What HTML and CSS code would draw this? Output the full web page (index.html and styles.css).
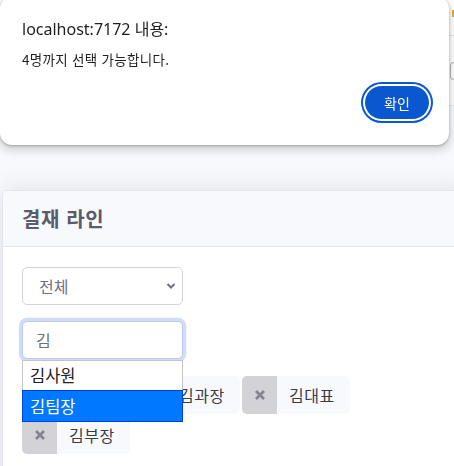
FILE: index.html
```html
<!DOCTYPE html>
<html lang="ko">
<head>
<meta charset="utf-8">
<title>결재 라인</title>
<link rel="stylesheet" href="styles.css">
</head>
<body>
<div class="page-top">
  <div class="page-bar"><span class="bar-mark"></span></div>
  <div class="page-panel"><span class="panel-mark"></span></div>
</div>

<div class="card">
  <div class="card-header"><h6 class="card-title">결재 라인</h6></div>
  <div class="card-body">
    <div class="select-wrap">
      <select class="form-select">
        <option>전체</option>
      </select>
      <svg class="chev" width="10" height="8" viewBox="0 0 10 8"><path d="M1.5 2 L5 5.5 L8.5 2" fill="none" stroke="#6e707e" stroke-width="2"/></svg>
    </div>
    <div class="search-wrap">
      <input class="form-input" type="text" value="김">
      <ul class="suggest">
        <li class="suggest-item">김사원</li>
        <li class="suggest-item active">김팀장</li>
      </ul>
    </div>
    <div class="tags">
      <span class="tag"><span class="tag-x"><svg width="12" height="12" viewBox="0 0 12 12"><path d="M2 2 L10 10 M10 2 L2 10" stroke="#84858f" stroke-width="2.8"/></svg></span><span class="tag-label">김대리</span></span>
      <span class="tag"><span class="tag-x"><svg width="12" height="12" viewBox="0 0 12 12"><path d="M2 2 L10 10 M10 2 L2 10" stroke="#84858f" stroke-width="2.8"/></svg></span><span class="tag-label">김과장</span></span>
      <span class="tag"><span class="tag-x"><svg width="12" height="12" viewBox="0 0 12 12"><path d="M2 2 L10 10 M10 2 L2 10" stroke="#84858f" stroke-width="2.8"/></svg></span><span class="tag-label">김대표</span></span>
      <span class="tag"><span class="tag-x"><svg width="12" height="12" viewBox="0 0 12 12"><path d="M2 2 L10 10 M10 2 L2 10" stroke="#84858f" stroke-width="2.8"/></svg></span><span class="tag-label">김부장</span></span>
    </div>
  </div>
</div>

<div class="dialog" role="alertdialog">
  <div class="dialog-title">localhost:7172 내용:</div>
  <div class="dialog-msg">4명까지 선택 가능합니다.</div>
  <div class="dialog-actions"><button class="dialog-btn">확인</button></div>
</div>
</body>
</html>
```

FILE: styles.css
```css
html, body {
  margin: 0;
  padding: 0;
}
body {
  width: 454px;
  height: 466px;
  overflow: hidden;
  background: #f8f9fc;
  font-family: "Noto Sans CJK KR", "Noto Sans", sans-serif;
  color: #3a3b45;
}

.page-top {
  background: #fff;
  height: 105px;
  border-bottom: 1px solid #eceef4;
}
.page-bar {
  height: 35px;
  border-bottom: 1px solid #e3e6f0;
  display: flex;
  justify-content: flex-end;
  align-items: flex-start;
}
.bar-mark {
  width: 2px;
  height: 7px;
  margin-top: 10px;
  background: #f0a43a;
}
.page-panel {
  display: flex;
  justify-content: flex-end;
}
.panel-mark {
  width: 3px;
  height: 16px;
  margin-top: 26px;
  border: 1px solid #b8b8bc;
  border-right: none;
  border-radius: 4px 0 0 4px;
}

.card {
  margin: 84px 0 0 2px;
  width: 470px;
  height: 300px;
  background: #fff;
  border: 1px solid #e3e6f0;
  border-radius: 5px;
  box-shadow: 0 0.15rem 1.75rem 0 rgba(58, 59, 69, 0.15);
}
.card-header {
  background: #f8f9fc;
  border-bottom: 1px solid #e3e6f0;
  height: 55px;
  display: flex;
  align-items: center;
  padding: 0 19px;
  border-radius: 5px 5px 0 0;
}
.card-title {
  margin: 0;
  font-size: 20px;
  font-weight: 700;
  color: #5a5c69;
  letter-spacing: 0.6px;
}
.card-body {
  padding: 20px 19px 0;
}

.select-wrap {
  position: relative;
  width: 161px;
}
.form-select {
  display: block;
  width: 161px;
  height: 38px;
  appearance: none;
  -webkit-appearance: none;
  background: #fff;
  border: 1px solid #d1d3e2;
  border-radius: 5px;
  padding: 0 12px 0 16px;
  font-family: inherit;
  font-size: 16px;
  color: #6e707e;
}
.chev {
  position: absolute;
  right: 7px;
  top: 15px;
}

.search-wrap {
  position: relative;
  width: 161px;
  margin-top: 16px;
}
.form-input {
  display: block;
  box-sizing: border-box;
  width: 161px;
  height: 38px;
  border: 1px solid #bac8f3;
  border-radius: 5px;
  padding: 0 13px;
  font-family: inherit;
  font-size: 16px;
  color: #6e707e;
  outline: none;
  box-shadow: 0 0 0 0.2rem rgba(78, 115, 223, 0.25);
}
.suggest {
  position: absolute;
  left: 0;
  top: 39px;
  width: 161px;
  margin: 0;
  padding: 0;
  list-style: none;
  background: #fff;
  z-index: 2;
}
.suggest-item {
  box-sizing: border-box;
  height: 30px;
  line-height: 28px;
  padding: 0 7px;
  font-size: 16.5px;
  color: #222;
  border: 1px solid #c4c4c4;
  border-bottom: none;
}
.suggest-item.active {
  height: 32px;
  line-height: 30px;
  background: #0078ff;
  color: #fff;
  border: 1px solid #0040e8;
}

.tags {
  margin-top: 17px;
  width: 340px;
  display: flex;
  flex-wrap: wrap;
  gap: 2px 2px;
}
.tag {
  display: inline-flex;
  width: 108px;
  height: 38px;
  border-radius: 5px;
  overflow: hidden;
  background: #f8f9fc;
}
.tag-x {
  width: 35px;
  flex: none;
  background: #d3d3d7;
  display: flex;
  align-items: center;
  justify-content: center;
}
.tag-label {
  display: flex;
  align-items: center;
  padding: 0 0 0 12px;
  font-size: 16px;
  letter-spacing: 0.5px;
  color: #3a3b45;
}

.dialog {
  position: fixed;
  left: 0;
  top: -3px;
  width: 449px;
  height: 148px;
  box-sizing: border-box;
  background: #fff;
  border-radius: 12px;
  box-shadow: 0 1px 3px rgba(0, 0, 0, 0.3), 0 4px 8px 3px rgba(0, 0, 0, 0.12);
  padding: 21px 16px 0 22px;
  z-index: 10;
}
.dialog-title {
  font-family: "Noto Sans", "Noto Sans CJK KR", sans-serif;
  font-size: 16px;
  color: #1f1f1f;
  line-height: 22px;
}
.dialog-msg {
  margin-top: 11px;
  font-family: "Noto Sans CJK KR", sans-serif;
  font-size: 13.5px;
  letter-spacing: 0.3px;
  color: #1f1f1f;
  line-height: 16px;
}
.dialog-actions {
  display: flex;
  justify-content: flex-end;
  margin-top: 19px;
  padding-right: 4px;
}
.dialog-btn {
  width: 64px;
  height: 33px;
  border: none;
  border-radius: 17px;
  background: #0b57d0;
  color: #fff;
  font-family: "Noto Sans CJK KR", sans-serif;
  font-size: 14px;
  box-shadow: 0 0 0 2px #fff, 0 0 0 4px #0b57d0;
  padding: 0;
}
```
